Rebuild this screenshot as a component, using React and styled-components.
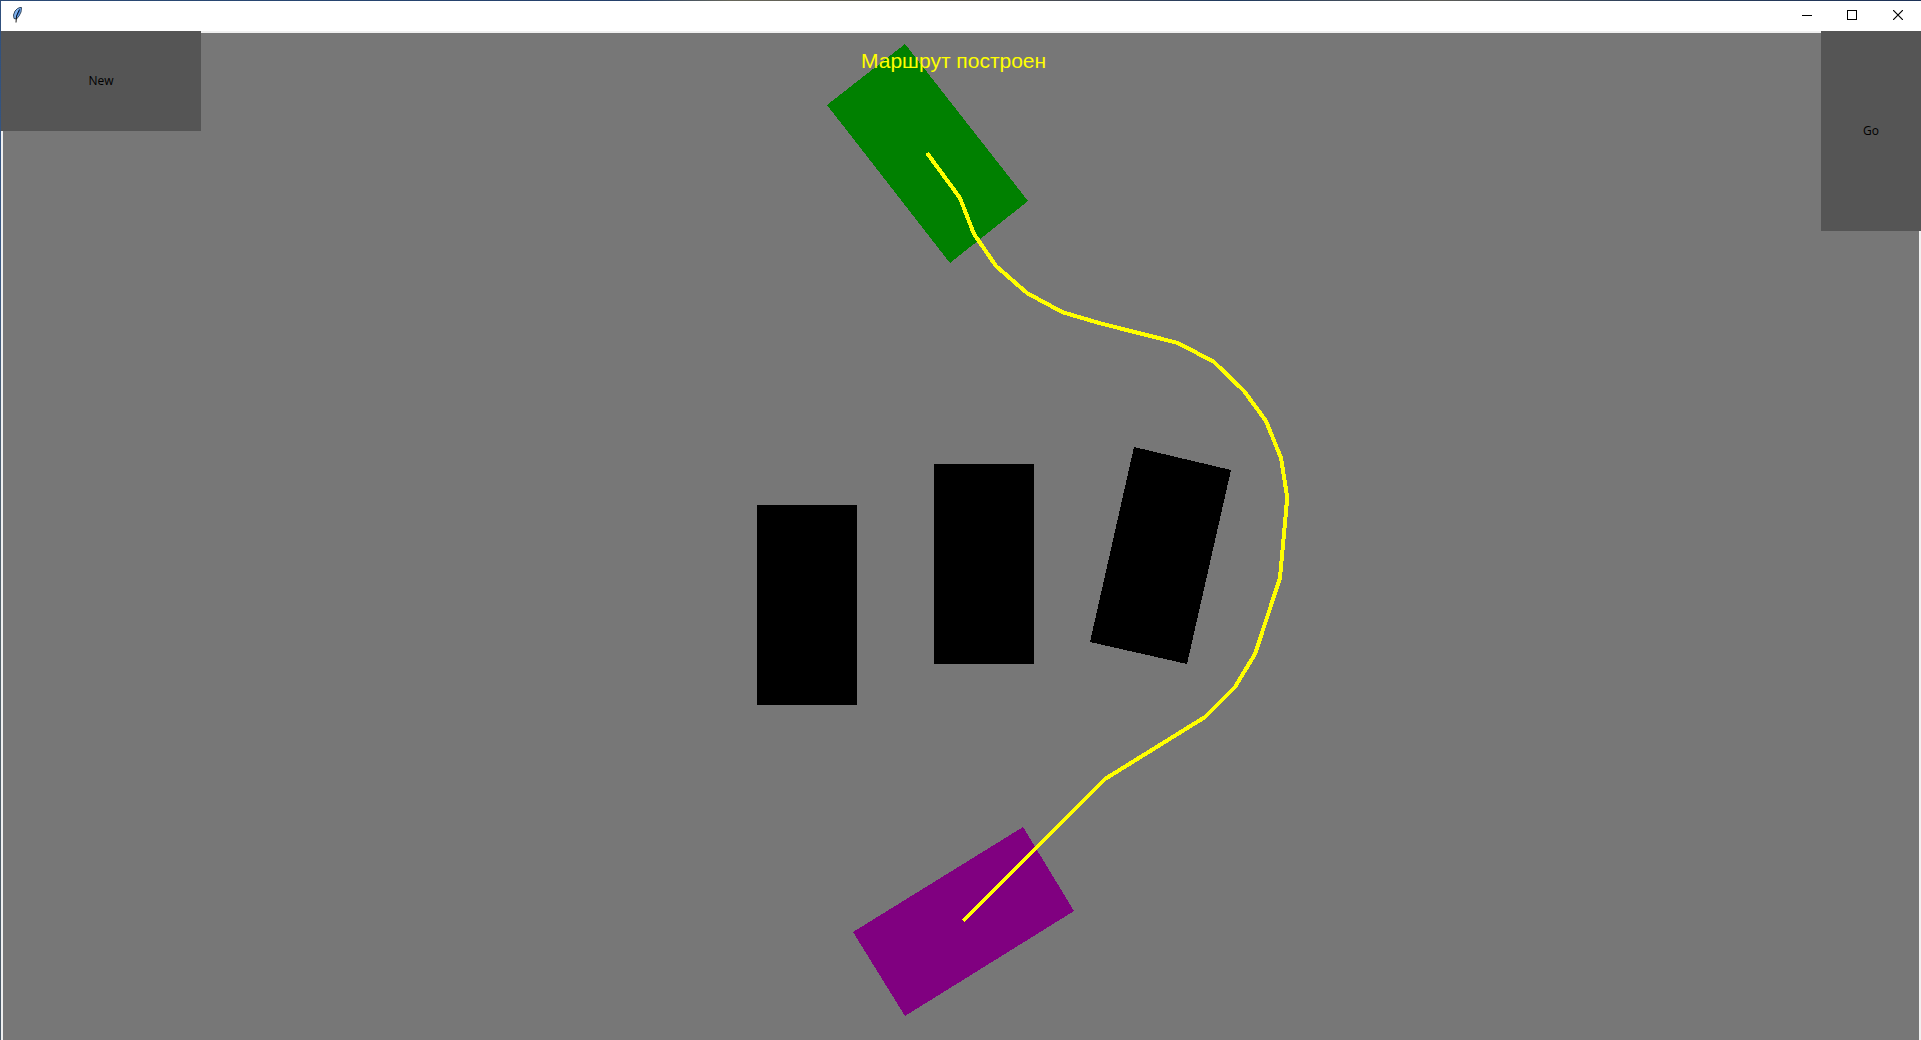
import React from 'react';
import styled, { createGlobalStyle } from 'styled-components';

const GlobalStyle = createGlobalStyle`
  * { box-sizing: border-box; }
  html, body { margin: 0; overflow: hidden; }
`;

const Window = styled.div`
  display: flex;
  flex-direction: column;
  height: 100vh;
  padding: 1px 0 0 1px;
  background:
    linear-gradient(90deg, #2b4a75 0%, #24406b 33%, #66665a 38%, #5a564e 50%, #3c4658 58%, #1f3a60 64%, #5c5c58 75%, #2b3f5c 86%, #1c3157 100%) top / 100% 1px no-repeat,
    linear-gradient(180deg, #2f4f7c 0%, #3a5a86 25%, #4b5f74 40%, #56646c 60%, #4a5a68 100%);
`;

const TitleBar = styled.header`
  display: flex;
  align-items: center;
  justify-content: space-between;
  flex: none;
  height: 30px;
  padding: 0 0 2px 8px;
  background: #ffffff;
`;

const Feather = styled.svg`
  width: 16px;
  height: 16px;
`;

const WindowControls = styled.div`
  display: flex;
`;

const WindowButton = styled.button`
  display: flex;
  align-items: center;
  justify-content: center;
  width: ${({ $wide }) => ($wide ? 46 : 45)}px;
  height: 28px;
  padding: 0;
  border: 0;
  background: transparent;
`;

const Client = styled.main`
  position: relative;
  display: flex;
  justify-content: space-between;
  align-items: flex-start;
  flex: 1;
  min-height: 0;
`;

const Field = styled.div`
  position: absolute;
  inset: 0;
  overflow: hidden;
  border: 2px solid #f0f0f0;
  border-bottom: 0;
  background: #777777;
`;

const Scene = styled.svg`
  display: block;
  width: 100%;
  height: 100%;
  shape-rendering: crispEdges;
`;

const Status = styled.p`
  position: absolute;
  top: 16px;
  left: 858px;
  margin: 0;
  color: #ffff00;
  font: 21px/24px "Liberation Sans", Arial, sans-serif;
  white-space: nowrap;
`;

const ActionButton = styled.button`
  position: relative;
  width: ${({ $width }) => $width}px;
  height: ${({ $height }) => $height}px;
  padding: 0;
  border: 0;
  background: #555555;
  color: #000000;
  font: 12px/16px "Open Sans", "Noto Sans", sans-serif;
`;

const obstacles = [
  '754,472 854,472 854,672 754,672',
  '931,431 1031,431 1031,631 931,631',
  '1131,414 1228,437 1184,631 1087,609',
];

const route = [
  [924, 120], [957, 165], [971, 201], [993, 233], [1024, 260], [1059, 279],
  [1096, 290], [1175, 310], [1211, 329], [1241, 358], [1263, 388], [1278, 425],
  [1284, 463], [1284, 467], [1277, 545], [1252, 621], [1232, 654], [1202, 684],
  [1102, 746], [960, 888],
];

export default function App() {
  return (
    <Window>
      <GlobalStyle />
      <TitleBar>
        <Feather viewBox="0 0 16 16" aria-hidden="true">
          <path d="M11 0.500H12.500L12 5 10 9 7.500 12 5 11.500 4.500 8 6 4 8.500 1.500Z" fill="#7fb2ee" stroke="#24384f" strokeWidth="0.900" />
          <path d="M11.500 1 11 5 8.500 9.500 7 11 8 6Z" fill="#3f7fdc" />
          <path d="M10.500 2.500 7.500 9 7 15.500" fill="none" stroke="#000" strokeWidth="0.900" />
        </Feather>
        <WindowControls>
          <WindowButton aria-label="Minimize">
            <svg width="10" height="10" shapeRendering="crispEdges"><path d="M0 5.500H10" stroke="#000" /></svg>
          </WindowButton>
          <WindowButton $wide aria-label="Maximize">
            <svg width="10" height="10" shapeRendering="crispEdges"><path d="M.5.5h9v9h-9Z" fill="none" stroke="#000" /></svg>
          </WindowButton>
          <WindowButton $wide aria-label="Close">
            <svg width="10" height="10"><path d="M0 0 10 10M10 0 0 10" stroke="#000" strokeWidth="1.200" /></svg>
          </WindowButton>
        </WindowControls>
      </TitleBar>
      <Client>
        <Field>
          <Scene role="img" aria-label="Route">
            <polygon points="902,11 1025,168 947,230 824,72" fill="#008000" />
            <polygon points="1020,794 1071,878 902,983 850,899" fill="#800080" />
            {obstacles.map((points) => (
              <polygon key={points} points={points} fill="#000000" />
            ))}
            <polyline points={route.join(' ')} fill="none" stroke="#ffff00" strokeWidth="4" strokeLinejoin="round" />
          </Scene>
          <Status>Маршрут построен</Status>
        </Field>
        <ActionButton $width={200} $height={100}>New</ActionButton>
        <ActionButton $width={100} $height={200}>Go</ActionButton>
      </Client>
    </Window>
  );
}
